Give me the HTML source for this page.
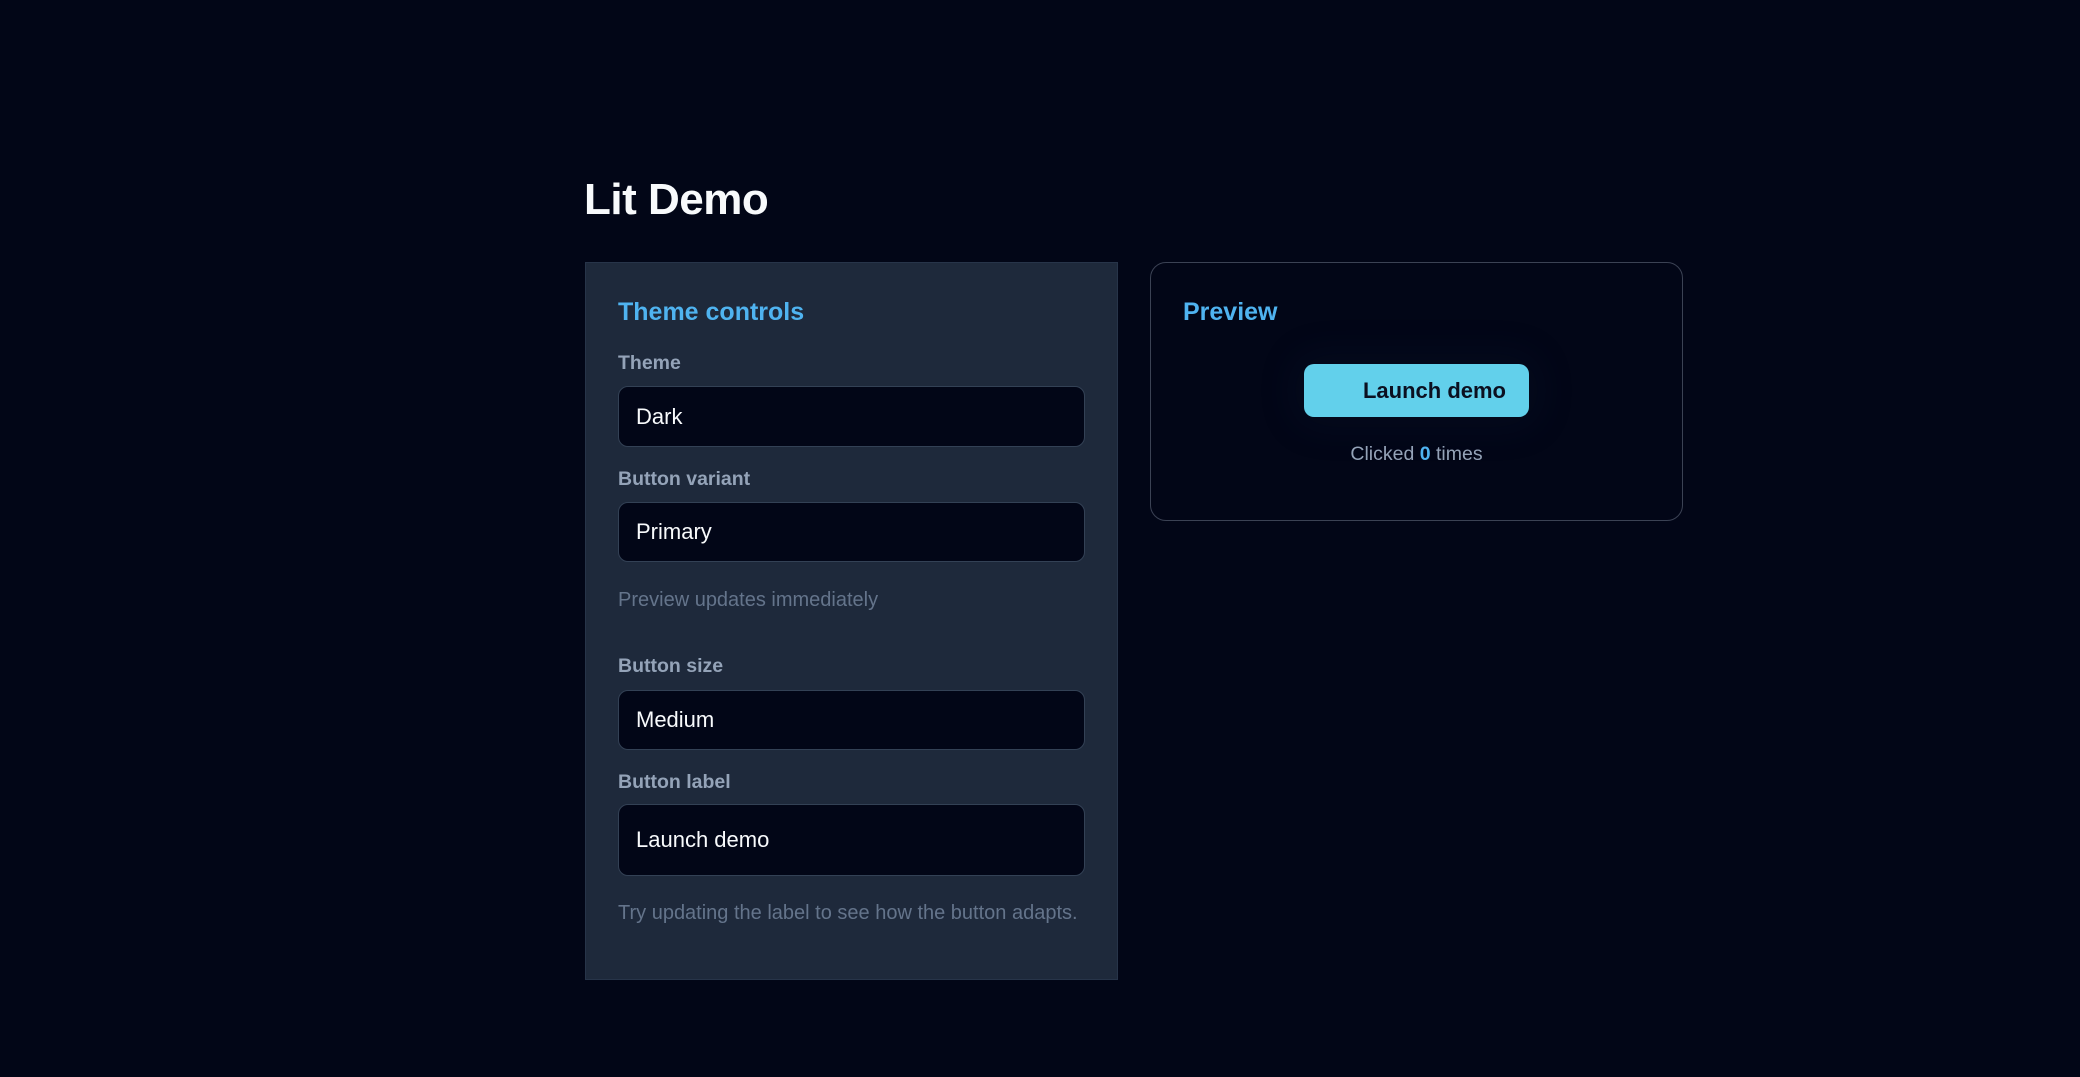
<!DOCTYPE html>
<html><head><meta charset="utf-8"><style>
*{box-sizing:border-box;margin:0;padding:0}
body{width:2080px;height:1077px;background:#020617;font-family:"Liberation Sans",sans-serif;position:relative;overflow:hidden;color:#fff}
.abs{position:absolute}
h1{position:absolute;left:584px;top:175px;font-size:44px;font-weight:700;color:#f8fafc;letter-spacing:-0.5px}
.panel{left:585px;top:262px;width:533px;height:718px;background:#1e293b;border:1px solid #273449}
.h2{font-size:25px;font-weight:700;color:#4fb3f0;position:absolute}
.lbl{position:absolute;left:618px;font-size:19.5px;font-weight:700;color:#94a3b8}
.inp{position:absolute;left:618px;width:467px;background:#020617;border:1px solid #334155;border-radius:10px;font-size:22px;color:#f8fafc;padding-left:17px;display:flex;align-items:center}
.help{position:absolute;left:618px;font-size:20px;color:#64748b}
.card{left:1150px;top:262px;width:533px;height:259px;border:1px solid #3b4254;border-radius:16px}
.btn{left:1304px;top:364px;width:225px;height:53px;background:#62d0eb;border-radius:10px;font-size:22px;font-weight:700;color:#0b1020;display:flex;align-items:center;justify-content:flex-end;padding-right:23px;box-shadow:0 0 40px 10px rgba(40,60,90,0.1)}
.clk{left:1150px;width:533px;top:443px;text-align:center;font-size:19.5px;color:#94a3b8}
</style></head><body>
<h1>Lit Demo</h1>
<div class="abs panel"></div>
<div class="h2" style="left:618px;top:298px">Theme controls</div>
<div class="lbl" style="top:352px">Theme</div>
<div class="inp" style="top:386px;height:61px">Dark</div>
<div class="lbl" style="top:468px">Button variant</div>
<div class="inp" style="top:502px;height:60px">Primary</div>
<div class="help" style="top:589px">Preview updates immediately</div>
<div class="lbl" style="top:655px">Button size</div>
<div class="inp" style="top:690px;height:60px">Medium</div>
<div class="lbl" style="top:771px">Button label</div>
<div class="inp" style="top:804px;height:72px">Launch demo</div>
<div class="help" style="top:902px">Try updating the label to see how the button adapts.</div>
<div class="abs card"></div>
<div class="h2" style="left:1183px;top:298px">Preview</div>
<div class="abs btn">Launch demo</div>
<div class="abs clk">Clicked <b style="color:#4fb3f0">0</b> times</div>
</body></html>
